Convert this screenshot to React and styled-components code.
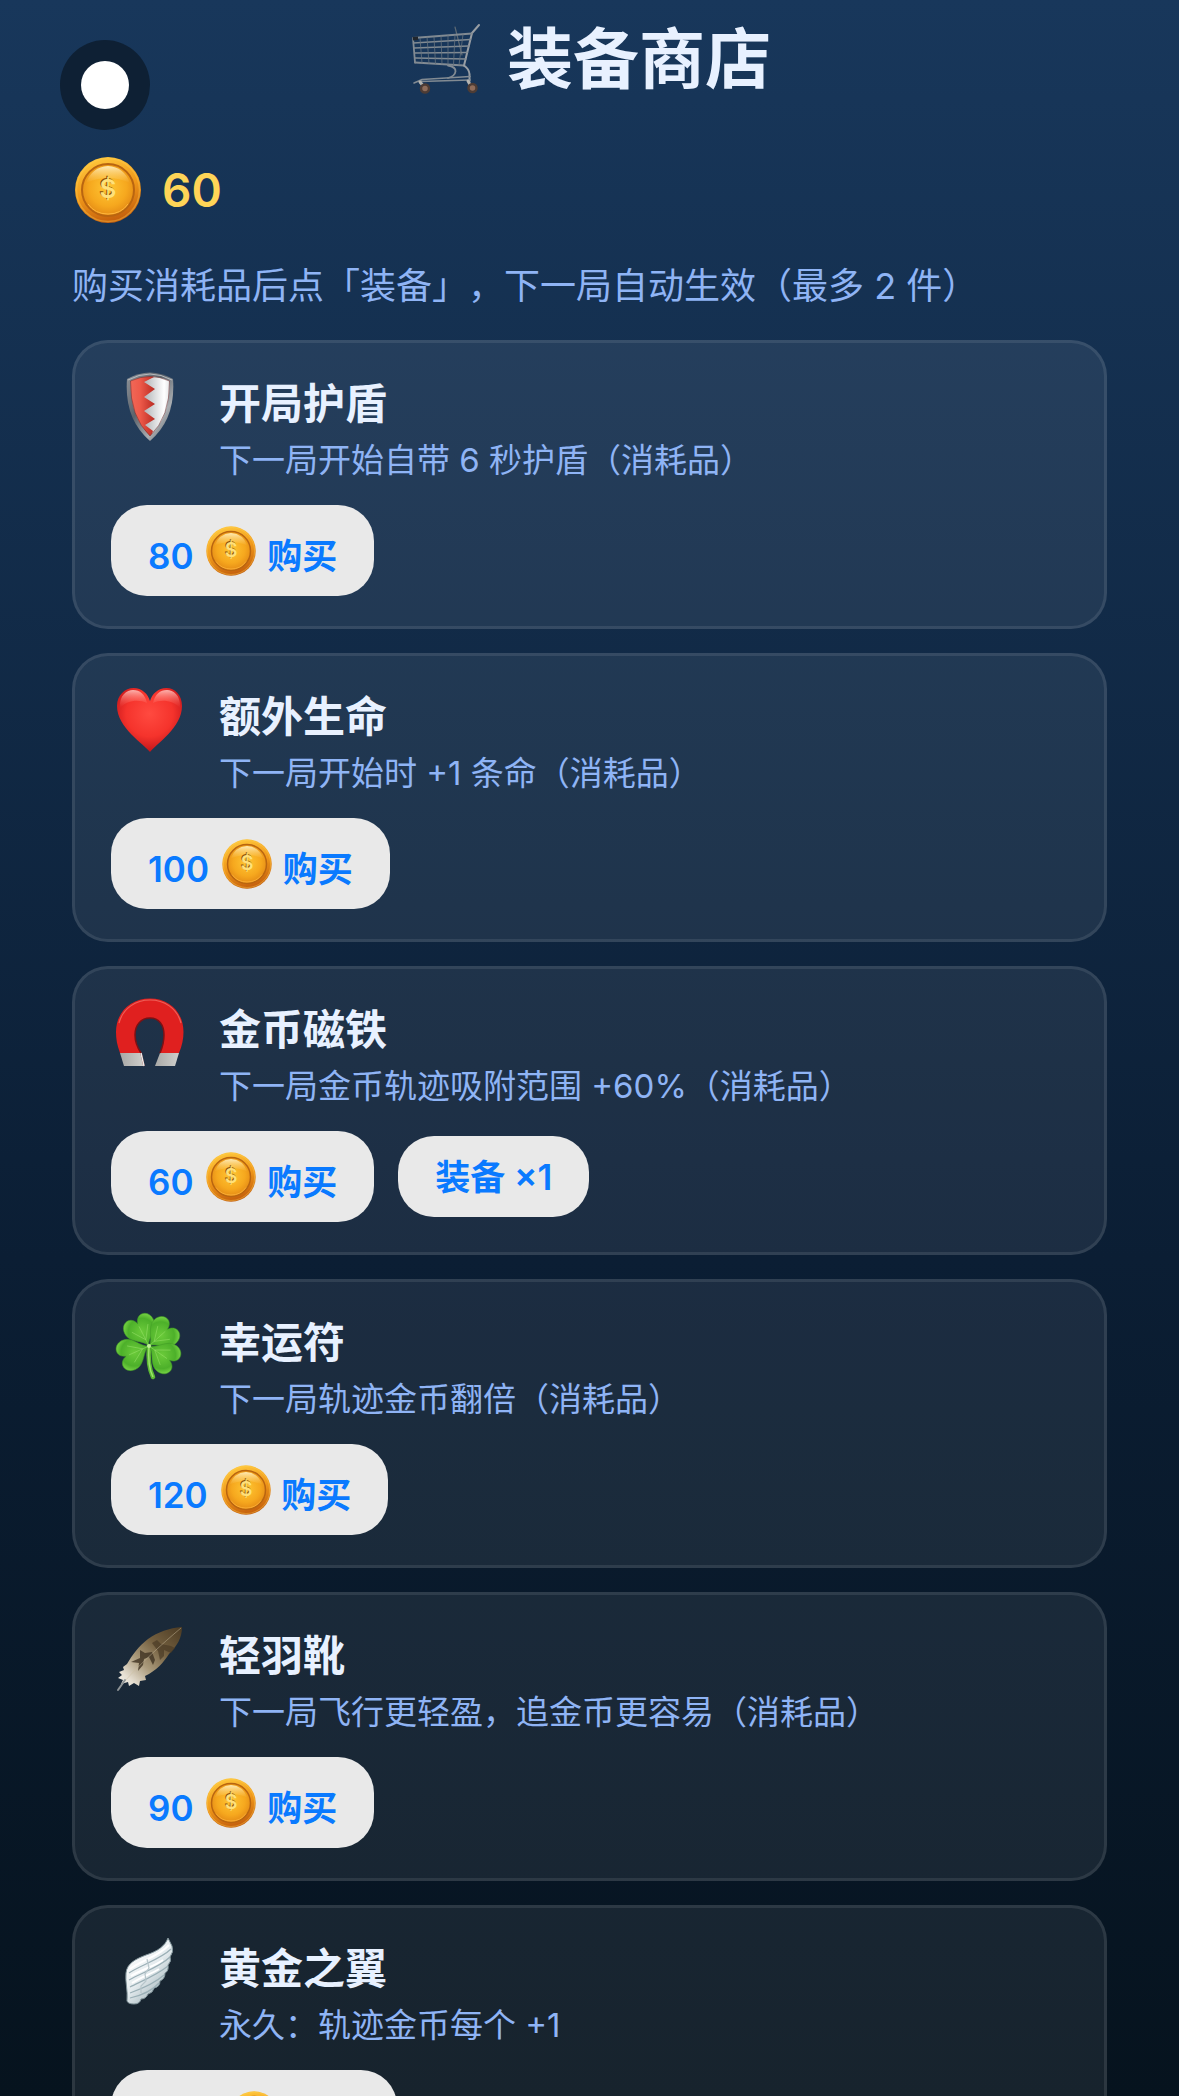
import React from 'react';
import styled, { createGlobalStyle } from 'styled-components';

const GlobalStyle = createGlobalStyle`
  * {
    box-sizing: border-box;
  }

  body {
    margin: 0;
    background: #06131e;
    font-family: Inter, "Noto Sans CJK SC", sans-serif;
    text-spacing-trim: space-all;
  }
`

const Page = styled.main`
  position: relative;
  height: 100vh;
  padding: 10px 72px 0;
  overflow-y: auto;
  scrollbar-width: none;
  background: linear-gradient(180deg, #18375b 0%, #0b1e34 60%, #06131e 100%);
`

const Header = styled.header`
  display: flex;
  justify-content: center;
  align-items: center;
  gap: 27px;
`

const Heading = styled.h1`
  margin: 0;
  color: #e8f1ff;
  font-size: 66px;
  font-weight: 700;
  line-height: 98px;
`

// floating round button over the page
const FloatButton = styled.button`
  position: absolute;
  top: 40px;
  left: 60px;
  display: flex;
  justify-content: center;
  align-items: center;
  width: 90px;
  height: 90px;
  padding: 0;
  border: none;
  border-radius: 50%;
  background: #0e2034;
`

const Dot = styled.span`
  width: 48px;
  height: 48px;
  border-radius: 50%;
  background: #fff;
`

const Balance = styled.div`
  display: flex;
  align-items: center;
  gap: 18px;
  margin-top: 46px;
  color: #ffd557;
  font-size: 46px;
  font-weight: 600;
  line-height: 72px;
`

const Hint = styled.p`
  margin: 35px 0 28px;
  color: #8fb4f5;
  font-size: 36px;
  line-height: 51px;
`

const ItemList = styled.ul`
  display: flex;
  flex-direction: column;
  gap: 24px;
  margin: 0;
  padding: 0 0 72px;
  list-style: none;
`

const Card = styled.li`
  padding: 24px 36px 30px;
  border: 3px solid rgba(255, 255, 255, 0.09);
  border-radius: 36px;
  background: rgba(255, 255, 255, 0.07);
`

const CardTop = styled.div`
  display: flex;
  align-items: flex-start;
  gap: 30px;
`

const CardText = styled.div`
  padding-top: 8px;
`

const Name = styled.h2`
  margin: 0;
  color: #e8f1ff;
  font-size: 42px;
  font-weight: 600;
  line-height: 58px;
`

const Desc = styled.p`
  margin: 0;
  color: #8fb4f5;
  font-size: 33px;
  line-height: 54px;
`

const Actions = styled.div`
  display: flex;
  align-items: center;
  gap: 24px;
  margin-top: 18px;
`

const PillButton = styled.button`
  height: ${({ $tall }) => ($tall ? '91px' : '81px')};
  padding: 0 37px;
  border: none;
  border-radius: 36px;
  background: #e9e9e9;
  color: #0a7aff;
  font-family: inherit;
  font-size: 35px;
  font-weight: 600;
  line-height: 42px;
  white-space: nowrap;
`

const Svg = styled.svg`
  display: block;
  flex-shrink: 0;
  width: ${({ $size }) => $size}px;
  height: ${({ $size }) => $size}px;
`

const InlineCoin = styled.svg`
  width: 54px;
  height: 54px;
  margin-left: 2px;
  vertical-align: -9px;
`

const HiddenSvg = styled.svg`
  position: absolute;
  width: 0;
  height: 0;
`

// gradients shared by all drawings
function Gradients() {
  return (
    <HiddenSvg aria-hidden="true">
      <defs>
        <linearGradient id="coinRim" x1="0.3" y1="0" x2="0.6" y2="1">
          <stop offset="0" stopColor="#ffc83c" />
          <stop offset="0.5" stopColor="#f0981a" />
          <stop offset="1" stopColor="#c25c0c" />
        </linearGradient>
        <radialGradient id="coinFace" cx="0.5" cy="0.45" r="0.6">
          <stop offset="0" stopColor="#ffc634" />
          <stop offset="0.6" stopColor="#f6a81e" />
          <stop offset="1" stopColor="#e08313" />
        </radialGradient>
        <linearGradient id="coinShine" x1="0" y1="0" x2="0" y2="1">
          <stop offset="0" stopColor="#fff3c8" stopOpacity="0.9" />
          <stop offset="1" stopColor="#ffd878" stopOpacity="0" />
        </linearGradient>
        <linearGradient id="steel" x1="0" y1="0" x2="1" y2="1">
          <stop offset="0" stopColor="#8e9399" />
          <stop offset="0.4" stopColor="#5c636b" />
          <stop offset="0.7" stopColor="#a9adb1" />
          <stop offset="1" stopColor="#4c535a" />
        </linearGradient>
        <linearGradient id="shieldRed" x1="0" y1="0" x2="1" y2="0">
          <stop offset="0" stopColor="#f2705f" />
          <stop offset="0.5" stopColor="#ee5a4a" />
          <stop offset="1" stopColor="#b92a22" />
        </linearGradient>
        <linearGradient id="shieldWhite" x1="0" y1="0" x2="1" y2="0">
          <stop offset="0" stopColor="#b0b3b6" />
          <stop offset="0.65" stopColor="#ffffff" />
          <stop offset="1" stopColor="#c9cccf" />
        </linearGradient>
        <radialGradient id="heart" cx="0.5" cy="0.4" r="0.6">
          <stop offset="0" stopColor="#ff4a40" />
          <stop offset="0.6" stopColor="#f5332c" />
          <stop offset="1" stopColor="#c3151a" />
        </radialGradient>
        <linearGradient id="heartShine" x1="0" y1="0" x2="0" y2="1">
          <stop offset="0" stopColor="#ffc2bc" stopOpacity="0.9" />
          <stop offset="1" stopColor="#ff5a50" stopOpacity="0" />
        </linearGradient>
        <linearGradient id="magnetTip" x1="0" y1="0" x2="1" y2="0">
          <stop offset="0" stopColor="#a8a8a6" />
          <stop offset="1" stopColor="#cfcfcc" />
        </linearGradient>
        <radialGradient id="leaf" cx="0.5" cy="0.5" r="0.65">
          <stop offset="0" stopColor="#6bcb3a" />
          <stop offset="0.65" stopColor="#4db02a" />
          <stop offset="1" stopColor="#86e04e" />
        </radialGradient>
        <linearGradient id="feather" x1="1" y1="0" x2="0" y2="1">
          <stop offset="0" stopColor="#4b3a22" />
          <stop offset="0.35" stopColor="#746040" />
          <stop offset="0.62" stopColor="#ab9b7c" />
          <stop offset="0.85" stopColor="#e6dfd2" />
          <stop offset="1" stopColor="#f6f3ee" />
        </linearGradient>
        <linearGradient id="wing" x1="0.2" y1="0.1" x2="0.8" y2="0.9">
          <stop offset="0" stopColor="#ffffff" />
          <stop offset="0.5" stopColor="#e4ebee" />
          <stop offset="1" stopColor="#9db0b6" />
        </linearGradient>
        <clipPath id="shieldClip">
          <path d="M19.500 14Q39 5 58.500 14Q59 50 39 69Q19 50 19.500 14Z" />
        </clipPath>
      </defs>
    </HiddenSvg>
  );
}

function CoinShape() {
  return (
    <>
      <circle cx="36" cy="36" r="33" fill="url(#coinRim)" />
      <circle cx="36" cy="36" r="31.5" fill="none" stroke="#ffd052" strokeOpacity="0.35" strokeWidth="1.5" />
      <circle cx="36" cy="36" r="26" fill="url(#coinFace)" stroke="#b96510" strokeWidth="2" />
      <path d="M14 29Q20 13 36 12Q52 13 58 29Q36 19 14 29Z" fill="url(#coinShine)" />
      <path d="M16 50Q23 60 36 60Q49 60 56 50" fill="none" stroke="#ffb63c" strokeWidth="1" />
      <text x="35" y="43" textAnchor="middle" fontFamily="Inter" fontSize="26" fill="#8a4f08">$</text>
      <text x="36" y="44" textAnchor="middle" fontFamily="Inter" fontSize="26" fill="#ffe07a">$</text>
    </>
  );
}

function CartIcon() {
  return (
    <Svg $size={72} viewBox="-2 0 72 72" fill="none" stroke="#828b93" strokeLinecap="round" aria-hidden="true">
      <path d="M45 4L52 32" stroke="#5d6974" strokeWidth="1.2" />
      <path d="M69 2L62 10L54 42.5" stroke="#989ea4" strokeWidth="2" />
      <path d="M3 15L62 10.5M5 39.5L54 42.5" strokeWidth="1.8" />
      <path d="M3 15L5 39.5" strokeWidth="1.8" />
      <path d="M3.5 20L60.500 16.500M4 25L59 23M4.500 30L57.500 29.500M4.800 35L56 36" strokeWidth="1.4" />
      <path d="M10 15L12 40M17 14L19 40.500M24 14L25.500 41M31 13L32 41M38 12.500L38 41.500M45 12L43.500 42M53 11.500L49 42" strokeWidth="0.8" stroke="#66727e" />
      <path d="M2.500 14L8 13.500L8 17L3 17.500Z" fill="#20262d" stroke="none" />
      <path d="M54 42.500Q59 46 59.500 51V58" stroke="#989ea4" strokeWidth="2" />
      <path d="M38 42.500Q46 44 45.500 48.500Q45 53 38 55" strokeWidth="1.800" />
      <path d="M4 60L12 56.500L60 53.500M10 58.500L60 57" strokeWidth="1.600" />
      <path d="M10 59L15 65M58 58L62 65" stroke="#b5b5b2" strokeWidth="3" />
      <circle cx="15" cy="65.500" r="4" fill="#8f6d5b" stroke="#4d3c35" strokeWidth="2.500" />
      <circle cx="62.500" cy="65" r="4" fill="#8f6d5b" stroke="#4d3c35" strokeWidth="2.500" />
    </Svg>
  );
}

function ShieldIcon() {
  return (
    <Svg $size={78} viewBox="0 0 78 78" aria-hidden="true">
      <path d="M16 12Q39 -1 62 12Q65 52 39 74Q13 52 16 12Z" fill="url(#steel)" />
      <g clipPath="url(#shieldClip)">
        <path d="M14 4H44V72H14Z" fill="url(#shieldRed)" />
        <path d="M64 4H34L43 10L33 15L44 22L33 30L44 37L33 44L44 52L34 58L42 64L38 74H64Z" fill="url(#shieldWhite)" />
      </g>
      <path d="M19.500 14Q39 5 58.500 14Q59 50 39 69Q19 50 19.500 14Z" fill="none" stroke="#6b2a2a" strokeOpacity="0.5" strokeWidth="1" />
      <path d="M17 13Q39 1 61 13" fill="none" stroke="#b7bbbe" strokeWidth="1" />
    </Svg>
  );
}

function HeartIcon() {
  return (
    <Svg $size={78} viewBox="0 0 78 78" aria-hidden="true">
      <path d="M39 72C33 64 6 48 6 26C6 15 14 8 22.500 8C31 8 37 14 39 21C41 14 47 8 55.500 8C64 8 71 15 71 26C71 48 45 64 39 72Z" fill="url(#heart)" />
      <path d="M9 28C8 15 16 10 22 10C29 10 34 14 36 23C28 19 16 20 9 28Z" fill="url(#heartShine)" />
      <path d="M69 28C70 15 62 10 56 10C49 10 44 14 42 23C50 19 62 20 69 28Z" fill="url(#heartShine)" />
    </Svg>
  );
}

function MagnetIcon() {
  return (
    <Svg $size={78} viewBox="0 0 78 78" aria-hidden="true">
      <path d="M9 60C6 52 5 46 5 39C5 19 20 5.500 39 5.500C58 5.500 72.500 19 72.500 39C72.500 46 71 53 68 60H49C52 53 53 48 53 42C53 32 48 25 39 25C30 25 24 32 24 42C24 48 26 54 30 60Z" fill="#e0201f" />
      <path d="M9 60H30L33 73H13Z" fill="url(#magnetTip)" />
      <path d="M68 60H49L44 73H64Z" fill="url(#magnetTip)" />
      <path d="M8 30C12 15 25 7 39 7C53 7 66 15 70 30" fill="none" stroke="#ee5f58" strokeWidth="1.200" />
      <path d="M33 73L30 60C26 54 24 48 24 42C24 32 30 25 39 25C48 25 53 32 53 42C53 48 52 53 49 60" fill="none" stroke="#7c1114" strokeWidth="1.500" />
      <path d="M30 60L33 73" stroke="#ececea" strokeWidth="1.500" />
    </Svg>
  );
}

const leafPath = 'M0 0C-2 -8 -16 -11 -16 -22C-16 -33 -3 -36 0 -25C3 -36 16 -33 16 -22C16 -11 2 -8 0 0Z';

function CloverIcon() {
  return (
    <Svg $size={78} viewBox="0 0 78 78" aria-hidden="true">
      <path d="M38 40C37 52 38 63 42 71" fill="none" stroke="#5cb832" strokeWidth="4.500" strokeLinecap="round" />
      <path d="M38 40C37 52 38 63 42 71" fill="none" stroke="#9be36c" strokeWidth="1.500" />
      {[-27, 48, 125, 246].map((angle) => (
        <g key={angle} transform={`translate(38 40) rotate(${angle})`}>
          <path d={leafPath} fill="url(#leaf)" stroke="#3f9a25" strokeWidth="0.500" />
          <path d="M0 0V-22M0 -7L-9 -20M0 -7L9 -20" fill="none" stroke="#9ae36a" strokeOpacity="0.6" strokeWidth="0.800" />
        </g>
      ))}
      <circle cx="38" cy="40" r="2" fill="#c2f09a" />
    </Svg>
  );
}

function FeatherIcon() {
  return (
    <Svg $size={78} viewBox="0 0 78 78" aria-hidden="true">
      <path d="M71 8C58 9 47 13 37 20C28 27 21 36 16 45L12 48L13 51L8 53L11 56L7 59L12 61L10 65L17 63L18 67L23 64L28 67L29 62L35 61L34 57C45 52 53 43 58 35C66 27 71 19 71 8Z" fill="url(#feather)" />
      <path d="M46 21L50 25L60 27L64 29L60 34L53 31L53 37L49 41L47 32L41 24Z" fill="#4a3a25" fillOpacity="0.7" />
      <path d="M29 31L34 34L41 33L44 41L42 46L38 38L33 40L32 46L27 52L28 44L20 43L29 39Z" fill="#3f3222" fillOpacity="0.8" />
      <path d="M70 9C52 24 28 46 14 62" fill="none" stroke="#cdbf9f" strokeOpacity="0.45" strokeWidth="1" />
      <path d="M14 61L7 71" fill="none" stroke="#8f9496" strokeWidth="2" strokeLinecap="round" />
    </Svg>
  );
}

function WingIcon() {
  return (
    <Svg $size={78} viewBox="0 0 78 78" aria-hidden="true">
      <path d="M57 6C54 14 47 19 35 23C25 27 16 31 15 41C14 50 17 58 16 69Q17 72 23 72Q29 72 30 67Q35 67 37 62Q42 61 43 56Q49 55 49 49Q54 47 54 41Q58 39 57 33Q61 29 59 25Q63 20 61 14Z" fill="url(#wing)" stroke="#7f9298" strokeWidth="1" />
      <path d="M18 41C30 33 50 27 60 17M18 48C30 41 49 35 59 25M19 55C31 49 46 43 57 34M19 61C30 57 43 52 53 43M19 66C28 64 40 60 48 51" fill="none" stroke="#9aafb6" strokeWidth="1.200" />
      <path d="M19 37C29 29 47 25 58 13M20 44C30 38 44 34 52 28M21 51C30 45 40 42 48 37" fill="none" stroke="#ffffff" strokeWidth="2" />
      <path d="M36 27L38 36L34 42L35 49L30 54L30 61" fill="none" stroke="#b6c5ca" strokeWidth="1.200" />
    </Svg>
  );
}

const items = [
  { name: '开局护盾', desc: '下一局开始自带 6 秒护盾（消耗品）', price: 80, owned: 0, Icon: ShieldIcon },
  { name: '额外生命', desc: '下一局开始时 +1 条命（消耗品）', price: 100, owned: 0, Icon: HeartIcon },
  { name: '金币磁铁', desc: '下一局金币轨迹吸附范围 +60%（消耗品）', price: 60, owned: 1, Icon: MagnetIcon },
  { name: '幸运符', desc: '下一局轨迹金币翻倍（消耗品）', price: 120, owned: 0, Icon: CloverIcon },
  { name: '轻羽靴', desc: '下一局飞行更轻盈，追金币更容易（消耗品）', price: 90, owned: 0, Icon: FeatherIcon },
  { name: '黄金之翼', desc: '永久：轨迹金币每个 +1', price: 300, owned: 0, Icon: WingIcon },
];

function ShopItem({ name, desc, price, owned, Icon }) {
  return (
    <Card>
      <CardTop>
        <Icon />
        <CardText>
          <Name>{name}</Name>
          <Desc>{desc}</Desc>
        </CardText>
      </CardTop>
      <Actions>
        <PillButton type="button" $tall>
          {price}{' '}
          <InlineCoin viewBox="0 0 72 72" aria-hidden="true"><CoinShape /></InlineCoin>
          {' '}购买
        </PillButton>
        {owned > 0 && <PillButton type="button">装备 ×{owned}</PillButton>}
      </Actions>
    </Card>
  );
}

function App() {
  return (
    <>
      <GlobalStyle />
      <Gradients />
      <Page lang="zh-CN">
        <FloatButton type="button" aria-label="菜单">
          <Dot />
        </FloatButton>
        <Header>
          <CartIcon />
          <Heading>装备商店</Heading>
        </Header>
        <Balance>
          <Svg $size={72} viewBox="0 0 72 72" aria-hidden="true"><CoinShape /></Svg>
          <span>60</span>
        </Balance>
        <Hint>购买消耗品后点「装备」，下一局自动生效（最多 2 件）</Hint>
        <ItemList>
          {items.map((item) => (
            <ShopItem key={item.name} {...item} />
          ))}
        </ItemList>
      </Page>
    </>
  );
}

export default App;
